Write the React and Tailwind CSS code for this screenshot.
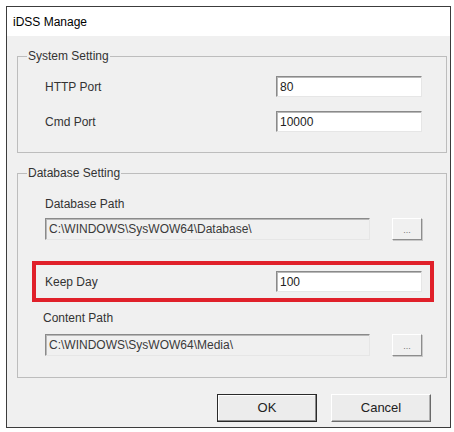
const sunken =
  'border border-t-[#8a8a8a] border-l-[#8a8a8a] border-r-[#e6e6e6] border-b-[#e6e6e6] shadow-[inset_1px_1px_0_#b8b8b8]'

function Field({ value, readOnly, className = '' }) {
  return (
    <div
      className={`${sunken} ${readOnly ? 'bg-[#f0f0f0] text-[#3a3a3a]' : 'bg-white text-[#222]'} flex items-center pl-[3px] text-[12px] leading-none ${className}`}
    >
      {value}
    </div>
  )
}

function Row({ label, value }) {
  return (
    <div className="flex h-[21px] items-center justify-between">
      <span className="text-[12px] text-[#333]">{label}</span>
      <Field value={value} className="h-[21px] w-[146px]" />
    </div>
  )
}

function PathRow({ value }) {
  return (
    <div className="flex h-[22px] items-center justify-between">
      <Field value={value} readOnly className="h-[22px] w-[325px]" />
      <button className="flex h-[22px] w-[30px] items-end justify-center border border-t-white border-l-white border-r-[#8d8d8d] border-b-[#8d8d8d] bg-[#f0f0f0] pb-[4px] text-[9px] leading-none text-[#777] shadow-[1px_1px_0_#c8c8c8]">
        ...
      </button>
    </div>
  )
}

function Group({ title, className = '', children }) {
  return (
    <fieldset className={`ml-[10px] mr-[3px] border border-[#bdbdbd] pl-[27px] pr-[24px] ${className}`}>
      <legend className="-ml-[18px] px-[1px] text-[12px] leading-[14px] text-[#333]">{title}</legend>
      {children}
    </fieldset>
  )
}

export default function App() {
  return (
    <div
      className="h-[432px] w-[454px] bg-white pl-[6px] pt-[6px]"
      style={{ fontFamily: '"Liberation Sans", Arial, sans-serif' }}
    >
      <div className="w-[445px] border border-[#3c3c3c] bg-[#f0f0f0]">
        <div className="flex h-[29px] items-center bg-white pl-[6px] text-[12px] text-black">
          iDSS Manage
        </div>

        <Group title="System Setting" className="mt-[13px] pb-[20px] pt-[13px]">
          <Row label="HTTP Port" value="80" />
          <div className="mt-[14px]">
            <Row label="Cmd Port" value="10000" />
          </div>
        </Group>

        <Group title="Database Setting" className="mt-[13px] pb-[21px] pt-[17px]">
          <div className="text-[12px] leading-[14px] text-[#333]">Database Path</div>
          <div className="mt-[7px]">
            <PathRow value="C:\WINDOWS\SysWOW64\Database\" />
          </div>

          <div className="-ml-[13px] -mr-[12px] mt-[21px] border-4 border-[#e0202a] py-[6px] pl-[9px] pr-[8px]">
            <Row label="Keep Day" value="100" />
          </div>

          <div className="-ml-[2px] mt-[9px] text-[12px] leading-[14px] text-[#333]">Content Path</div>
          <div className="mt-[9px]">
            <PathRow value="C:\WINDOWS\SysWOW64\Media\" />
          </div>
        </Group>

        <div className="mt-[16px] flex justify-end gap-[14px] pb-[5px] pr-[19px]">
          <button className="h-[28px] w-[100px] border border-[#2a2a2a] bg-[#ececec] text-[13px] text-[#222] shadow-[inset_-1px_-1px_0_#8a8a8a,inset_1px_1px_0_#fff]">
            OK
          </button>
          <button className="h-[28px] w-[100px] border border-t-white border-l-white border-r-[#6a6a6a] border-b-[#6a6a6a] bg-[#ececec] text-[13px] text-[#222] shadow-[inset_-1px_-1px_0_#b0b0b0]">
            Cancel
          </button>
        </div>
      </div>
    </div>
  )
}
